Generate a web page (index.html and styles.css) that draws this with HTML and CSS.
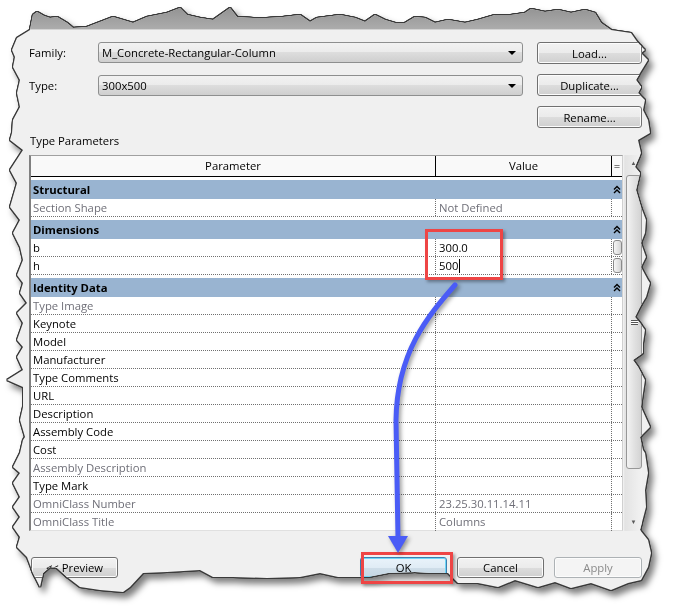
FILE: index.html
```html
<!DOCTYPE html>
<html lang="en">
<head>
    <meta charset="UTF-8">
    <title>Type Properties</title>
    <link rel="stylesheet" href="styles.css">
</head>
<body>
    <div class="page">
        <div class="paper">
            <div class="window">
                <div class="titlebar"></div>
                <div class="dialog">
                    <div class="top">
                        <div class="fields">
                            <div class="field">
                                <label>Family:</label>
                                <div class="combo">M_Concrete-Rectangular-Column<span class="drop"></span></div>
                            </div>
                            <div class="field">
                                <label>Type:</label>
                                <div class="combo">300x500<span class="drop"></span></div>
                            </div>
                        </div>
                        <div class="side">
                            <button class="btn">Load...</button>
                            <button class="btn">Duplicate...</button>
                            <button class="btn">Rename...</button>
                        </div>
                    </div>

                    <div class="section-label">Type Parameters</div>

                    <div class="grid-wrap">
                        <div class="grid">
                            <div class="row head">
                                <div class="cell">Parameter</div>
                                <div class="cell">Value</div>
                                <div class="cell">=</div>
                            </div>

                            <div class="group"><span>Structural</span><svg class="chev" width="8" height="9" viewBox="0 0 8 9"><path d="M1 4.5 L4 1.5 L7 4.5 M1 8 L4 5 L7 8" fill="none" stroke="#000" stroke-width="1.4"/></svg></div>
                            <div class="row">
                                <div class="cell dim">Section Shape</div>
                                <div class="cell dim">Not Defined</div>
                                <div class="cell"></div>
                            </div>

                            <div class="group"><span>Dimensions</span><svg class="chev" width="8" height="9" viewBox="0 0 8 9"><path d="M1 4.5 L4 1.5 L7 4.5 M1 8 L4 5 L7 8" fill="none" stroke="#000" stroke-width="1.4"/></svg></div>
                            <div class="row">
                                <div class="cell">b</div>
                                <div class="cell">300.0</div>
                                <div class="cell"><span class="pick"></span></div>
                            </div>
                            <div class="row">
                                <div class="cell">h</div>
                                <div class="cell">500<span class="caret"></span></div>
                                <div class="cell"><span class="pick"></span></div>
                            </div>

                            <div class="group"><span>Identity Data</span><svg class="chev" width="8" height="9" viewBox="0 0 8 9"><path d="M1 4.5 L4 1.5 L7 4.5 M1 8 L4 5 L7 8" fill="none" stroke="#000" stroke-width="1.4"/></svg></div>
                            <div class="row"><div class="cell dim">Type Image</div><div class="cell"></div><div class="cell"></div></div>
                            <div class="row"><div class="cell">Keynote</div><div class="cell"></div><div class="cell"></div></div>
                            <div class="row"><div class="cell">Model</div><div class="cell"></div><div class="cell"></div></div>
                            <div class="row"><div class="cell">Manufacturer</div><div class="cell"></div><div class="cell"></div></div>
                            <div class="row"><div class="cell">Type Comments</div><div class="cell"></div><div class="cell"></div></div>
                            <div class="row"><div class="cell">URL</div><div class="cell"></div><div class="cell"></div></div>
                            <div class="row"><div class="cell">Description</div><div class="cell"></div><div class="cell"></div></div>
                            <div class="row"><div class="cell">Assembly Code</div><div class="cell"></div><div class="cell"></div></div>
                            <div class="row"><div class="cell">Cost</div><div class="cell"></div><div class="cell"></div></div>
                            <div class="row"><div class="cell dim">Assembly Description</div><div class="cell"></div><div class="cell"></div></div>
                            <div class="row"><div class="cell">Type Mark</div><div class="cell"></div><div class="cell"></div></div>
                            <div class="row"><div class="cell dim">OmniClass Number</div><div class="cell dim">23.25.30.11.14.11</div><div class="cell"></div></div>
                            <div class="row last"><div class="cell dim">OmniClass Title</div><div class="cell dim">Columns</div><div class="cell"></div></div>
                        </div>
                        <div class="scrollbar">
                            <div class="sb-arrow">&#9650;</div>
                            <div class="thumb"><span class="grip"></span></div>
                            <div class="sb-fill"></div>
                            <div class="sb-arrow">&#9660;</div>
                        </div>
                    </div>

                    <div class="footer">
                        <button class="btn preview">&lt;&lt; Preview</button>
                        <button class="btn ok">OK</button>
                        <button class="btn">Cancel</button>
                        <button class="btn apply" disabled>Apply</button>
                    </div>
                </div>
            </div>
        </div>

        <!-- annotations -->
        <div class="mark mark-values"></div>
        <div class="mark mark-ok"></div>
        <svg class="arrow" width="678" height="614" viewBox="0 0 678 614">
            <path d="M455 285 C 428 316, 397 352, 396 420 L 398 538" fill="none" stroke="#4a5cf6" stroke-width="5" stroke-linecap="round"/>
            <polygon points="388,536 408,536 398,553" fill="#4a5cf6"/>
        </svg>
    </div>
</body>
</html>
```

FILE: styles.css
```css
body {
    margin: 0;
    background: #fff;
    font-family: "Open Sans", "Noto Sans", sans-serif;
    font-size: 11.3px;
    color: #000;
}
.page {
    position: relative;
    width: 678px;
    height: 614px;
    overflow: hidden;
}
.paper {
    filter: drop-shadow(1px 0 0 #3a3a3a) drop-shadow(-1px 0 0 #3a3a3a) drop-shadow(0 1px 0 #3a3a3a) drop-shadow(0 -1px 0 #3a3a3a) drop-shadow(4px 5px 3px rgba(0,0,0,0.5));
}
.window {
    width: 678px;
    height: 614px;
    background: #f0f0f0;
    clip-path: polygon(33px 15px, 37px 12px, 44px 16px, 50px 18px, 57px 17px, 67px 23px, 73px 28px, 87px 27px, 100px 22px, 113px 17px, 123px 20px, 133px 23px, 147px 17px, 167px 13px, 180px 8px, 187px 15px, 200px 18px, 213px 20px, 230px 8px, 237px 17px, 253px 18px, 267px 18px, 283px 17px, 300px 15px, 310px 22px, 317px 18px, 340px 15px, 355px 18px, 365px 22px, 375px 15px, 385px 20px, 395px 23px, 405px 23px, 415px 17px, 425px 18px, 435px 23px, 448px 20px, 465px 23px, 478px 20px, 495px 15px, 511px 15px, 525px 13px, 531px 9px, 545px 12px, 558px 10px, 571px 13px, 585px 10px, 595px 13px, 601px 23px, 611px 30px, 631px 33px, 638px 43px, 645px 50px,
        641px 53px, 648px 60px, 640px 73px, 636px 80px, 641px 87px, 638px 93px, 645px 100px, 643px 110px, 648px 120px, 650px 133px, 638px 140px, 641px 153px, 635px 167px, 640px 173px, 636px 190px, 641px 207px, 646px 220px, 645px 233px, 641px 243px, 646px 257px, 641px 267px, 648px 280px, 650px 283px, 646px 297px, 640px 307px, 635px 317px, 640px 323px, 645px 330px, 643px 343px, 643px 353px, 633px 360px, 638px 367px, 645px 380px, 643px 393px, 641px 407px, 650px 427px, 640px 437px, 643px 450px, 645px 453px, 648px 473px, 645px 490px, 646px 507px, 640px 530px, 648px 540px, 651px 553px, 648px 567px, 641px 580px,
        628px 583px, 611px 590px, 591px 583px, 571px 588px, 555px 582px, 538px 587px, 515px 580px, 498px 587px, 478px 583px, 458px 583px, 448px 573px, 431px 573px, 415px 572px, 388px 573px, 368px 577px, 351px 577px, 338px 577px, 320px 573px, 300px 577px, 267px 578px, 233px 577px, 213px 577px, 200px 570px, 167px 572px, 143px 573px, 130px 587px, 123px 592px, 100px 590px, 80px 587px, 67px 577px, 57px 568px, 50px 567px, 43px 573px, 40px 587px, 33px 573px, 27px 557px,
        17px 547px, 20px 537px, 13px 527px, 20px 517px, 13px 507px, 20px 497px, 13px 483px, 20px 473px, 13px 467px, 20px 453px, 23px 440px, 25px 437px, 20px 420px, 23px 407px, 23px 387px, 7px 380px, 23px 370px, 17px 357px, 23px 347px, 17px 340px, 23px 323px, 17px 313px, 27px 303px, 20px 293px, 23px 283px, 17px 275px, 23px 260px, 20px 247px, 13px 233px, 20px 220px, 10px 207px, 17px 183px, 10px 170px, 23px 150px, 10px 140px, 12px 133px, 13px 120px, 20px 107px, 17px 93px, 20px 80px, 13px 67px, 15px 57px, 12px 50px, 17px 38px, 30px 30px);
}
.titlebar {
    height: 29px;
    background: linear-gradient(#8a8a8a, #acacac);
    border-bottom: 1px solid #d4d4d4;
}
.dialog {
    padding: 12px 36px 0 29px;
}

/* top block */
.top {
    display: flex;
    justify-content: space-between;
}
.fields {
    display: flex;
    flex-direction: column;
    gap: 12px;
}
.field {
    display: flex;
    align-items: center;
}
.field label {
    width: 69px;
}
.combo {
    position: relative;
    box-sizing: border-box;
    width: 425px;
    height: 21px;
    line-height: 19px;
    padding-left: 3px;
    border: 1px solid #8e8f8f;
    border-radius: 3px;
    background: linear-gradient(#f2f2f2 0%, #ebebeb 50%, #dddddd 50%, #cfcfcf 100%);
}
.drop {
    position: absolute;
    right: 6px;
    top: 8px;
    border-left: 4px solid transparent;
    border-right: 4px solid transparent;
    border-top: 4px solid #000;
}
.side {
    display: flex;
    flex-direction: column;
    gap: 10px;
}
.btn {
    box-sizing: border-box;
    width: 105px;
    height: 22px;
    padding: 0;
    font-family: inherit;
    font-size: 11.3px;
    color: #000;
    border: 1px solid #707070;
    border-radius: 3px;
    background: linear-gradient(#f2f2f2 0%, #ebebeb 50%, #dddddd 50%, #cfcfcf 100%);
    box-shadow: inset 0 0 0 1px #fcfcfc;
}

.section-label {
    margin-top: 5px;
    line-height: 16px;
    padding-left: 1px;
}

/* parameter grid */
.grid-wrap {
    display: flex;
    margin-top: 6px;
    height: 376px;
}
.grid {
    box-sizing: border-box;
    width: 594px;
    border-left: 2px solid #808080;
    border-top: 1px solid #a0a0a0;
    border-right: 1px solid #d0d0d0;
    border-bottom: 1px solid #e0e0e0;
    background: #fff;
}
.row {
    display: grid;
    grid-template-columns: 405px 176px 10px;
    height: 18px;
    box-sizing: border-box;
    border-bottom: 1px dotted #707070;
}
.row.last {
    border-bottom: none;
}
.cell {
    box-sizing: border-box;
    padding-left: 2px;
    line-height: 17px;
    white-space: nowrap;
    overflow: hidden;
}
.row .cell:nth-child(1),
.row .cell:nth-child(2) {
    border-right: 1px dotted #707070;
}
.row .cell:nth-child(2) {
    padding-left: 3px;
}
.row .cell:nth-child(3) {
    padding-left: 0;
}
.dim {
    color: #6f6f78;
}
.row.head {
    height: 21px;
    border-bottom: 1px solid #000;
    background: #f9f9f9;
}
.row.head .cell {
    text-align: center;
    line-height: 20px;
    padding-left: 0;
    border-right: 1px solid #000;
}
.row.head .cell:last-child {
    border-right: none;
}
.group {
    position: relative;
    height: 19px;
    border-top: 3px solid #fff;
    background: #99b4d1;
    font-weight: bold;
    line-height: 19px;
    padding-left: 2px;
}
.chev {
    position: absolute;
    left: 582px;
    top: 5px;
}
.pick {
    display: block;
    margin: 1px 0 0 1px;
    width: 9px;
    height: 15px;
    box-sizing: border-box;
    border: 1px solid #8a8a8a;
    border-radius: 3px;
    background: linear-gradient(90deg, #f6f6f6, #d4d4d4);
}
.caret {
    display: inline-block;
    width: 1px;
    height: 14px;
    background: #000;
    vertical-align: -3px;
    margin-left: 1px;
}

/* scrollbar */
.scrollbar {
    display: flex;
    flex-direction: column;
    width: 18px;
    margin-left: 1px;
    background: linear-gradient(90deg, #e3e3e3, #f2f2f2);
    border-left: 1px solid #e6e6e6;
}
.sb-arrow {
    height: 17px;
    font-size: 6px;
    line-height: 17px;
    text-align: center;
    color: #5a5a5a;
}
.thumb {
    position: relative;
    margin: 3px 0 0 1px;
    height: 292px;
    border: 1px solid #979797;
    border-radius: 3px;
    background: linear-gradient(90deg, #f3f3f3, #e2e2e2 50%, #d3d3d3);
}
.grip {
    position: absolute;
    left: 4px;
    top: 144px;
    width: 7px;
    height: 5px;
    border-top: 1px solid #555;
    border-bottom: 1px solid #555;
    box-sizing: border-box;
    background: linear-gradient(#fff 40%, #555 40%, #555 60%, #fff 60%);
}
.sb-fill {
    flex: 1;
}

/* footer buttons */
.footer {
    display: flex;
    margin-top: 26px;
    padding-left: 2px;
    gap: 10px;
}
.footer .btn {
    width: 87px;
    height: 21px;
}
.footer .ok {
    margin-left: auto;
    border-color: #3c7fb1;
    background: linear-gradient(#e9f3fa 0%, #e0ecf5 50%, #cfdee9 50%, #c4d6e3 100%);
    box-shadow: inset 0 0 0 1px #6fd6f6;
}
.footer .apply {
    width: 88px;
    color: #8a8a8a;
    border-color: #adb2b5;
    background: #f4f4f4;
}

/* annotations */
.mark {
    position: absolute;
    box-sizing: border-box;
    border: 3px solid #ee4545;
    box-shadow: 2px 2px 3px rgba(0,0,0,0.35);
}
.mark-values {
    left: 425px;
    top: 229px;
    width: 78px;
    height: 51px;
}
.mark-ok {
    left: 361px;
    top: 552px;
    width: 92px;
    height: 32px;
}
.arrow {
    position: absolute;
    left: 0;
    top: 0;
    filter: drop-shadow(2px 2px 2px rgba(0,0,0,0.4));
}
```
